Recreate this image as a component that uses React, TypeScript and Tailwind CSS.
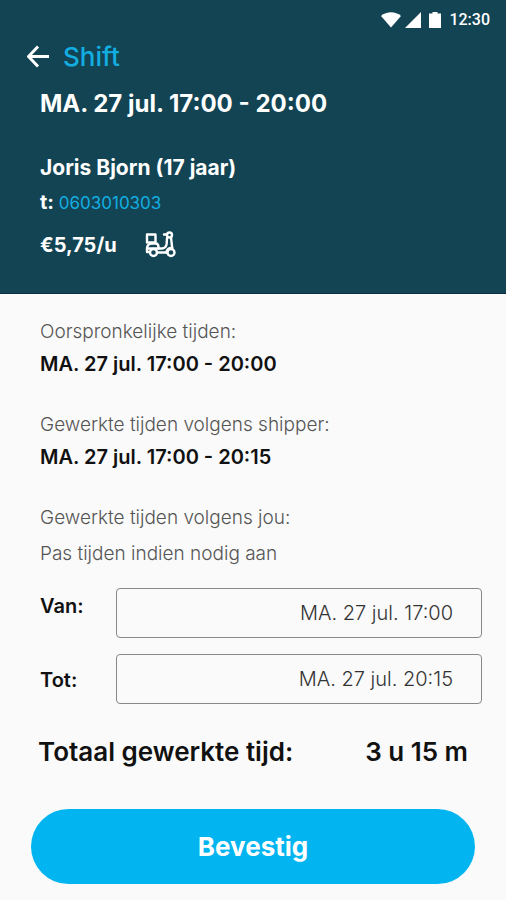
import { useState } from "react";

type WorkedTime = {
    label: string;
    value: string;
};

const workedTimes: WorkedTime[] = [
    { label: "Oorspronkelijke tijden:", value: "MA. 27 jul. 17:00 - 20:00" },
    { label: "Gewerkte tijden volgens shipper:", value: "MA. 27 jul. 17:00 - 20:15" },
];

function StatusBar() {
    return (
        <div className="flex h-10 items-center justify-end pr-4 text-white">
            <svg className="mr-1 h-4 w-5" viewBox="0 0 20 16" fill="currentColor" aria-hidden="true">
                <path d="M0 4C5.5-1 14.500-1 20 4L10 15.500Z" />
            </svg>
            <svg className="mr-2 h-4 w-4" viewBox="0 0 16 16" fill="currentColor" aria-hidden="true">
                <path d="M16 0v16H0Z" />
            </svg>
            <svg className="mr-2 h-4 w-3" viewBox="0 0 12 16" fill="currentColor" aria-hidden="true">
                <path d="M3.500 0h5v1.500H12V16H0V1.500h3.500Z" />
            </svg>
            <span className="font-[Roboto,sans-serif] text-base font-medium">12:30</span>
        </div>
    );
}

function ScooterIcon() {
    return (
        <svg
            className="h-7 w-8"
            viewBox="0 0 32 28"
            fill="none"
            stroke="currentColor"
            strokeWidth="2.4"
            strokeLinejoin="round"
            strokeLinecap="round"
            role="img"
            aria-label="Scooter"
        >
            {/* box and rear body */}
            <rect x="2" y="3.500" width="8.500" height="8" />
            <path d="M4 21H2v-3.500C2 14.500 4 12.500 7 12.500h3.500c2 0 3 1.500 3 3.500v1.500M2.500 17.500h11" />
            {/* floor, steering column and handlebar */}
            <path d="M12 21.500h9.500M13.500 17.500H17c3-.5 4.500-2.500 4.700-5L22 7M26 6.500l1.200 10.500" />
            <circle cx="24.500" cy="4" r="2.500" />
            <path d="M22 3.500h-3M21.500 21.500c0-3 2.500-5 5.700-4.500" />
            <circle cx="8.500" cy="21.500" r="3.500" />
            <circle cx="26" cy="21.500" r="3.500" />
        </svg>
    );
}

export default function App() {
    const [from, setFrom] = useState("MA. 27 jul. 17:00");
    const [until, setUntil] = useState("MA. 27 jul. 20:15");

    return (
        <main className="min-h-screen bg-[#fafafa] font-[Inter,sans-serif] text-[#111111]">
            <header className="border-b border-[#0b2c42] bg-[#124454] pb-8 text-white">
                <StatusBar />

                <div className="flex h-8 items-center gap-3 px-[27px]">
                    <button type="button" aria-label="Terug">
                        <svg
                            className="h-6 w-6"
                            viewBox="0 0 24 24"
                            fill="none"
                            stroke="currentColor"
                            strokeWidth="3"
                            aria-hidden="true"
                        >
                            <path d="M11 2.500L1.500 12.500l9.500 10M1.500 12.500H22" />
                        </svg>
                    </button>
                    <h1 className="text-[26px] font-medium text-[#12aee2]">Shift</h1>
                </div>

                <div className="px-10">
                    <h2 className="mt-4 text-2xl font-bold">MA. 27 jul. 17:00 - 20:00</h2>
                    <p className="mt-8 text-[21px] leading-8 font-bold">Joris Bjorn (17 jaar)</p>
                    <p className="text-xl leading-9 font-bold">
                        t:{" "}
                        <a href="tel:0603010303" className="text-[17px] font-normal text-[#12aee2]">
                            0603010303
                        </a>
                    </p>
                    <div className="mt-2 flex items-center gap-7">
                        <span className="text-xl leading-8 font-bold">€5,75/u</span>
                        <ScooterIcon />
                    </div>
                </div>
            </header>

            <section className="px-10 pt-6">
                {workedTimes.map((t) => (
                    <div key={t.label} className="mb-[31px]">
                        <p className="text-[19px] leading-7 font-light text-[#555555]">{t.label}</p>
                        <p className="mt-0.5 text-xl leading-8 font-semibold">{t.value}</p>
                    </div>
                ))}
                <p className="text-[19px] leading-7 font-light text-[#555555]">
                    Gewerkte tijden volgens jou:
                </p>
                <p className="mt-2 text-[19px] leading-7 font-light text-[#555555]">
                    Pas tijden indien nodig aan
                </p>
            </section>

            <form onSubmit={(e) => e.preventDefault()}>
                <div className="mt-5 flex items-start pr-6 pl-10">
                    <div className="flex w-[76px] shrink-0 flex-col gap-[38px] text-xl leading-9 font-semibold">
                        <label htmlFor="from">Van:</label>
                        <label htmlFor="until">Tot:</label>
                    </div>
                    <div className="flex min-w-0 flex-1 flex-col gap-4">
                        <input
                            id="from"
                            value={from}
                            onChange={(e) => setFrom(e.target.value)}
                            className="h-[50px] w-full rounded border border-[#888888] bg-transparent px-7 text-right text-xl font-light text-[#333333]"
                        />
                        <input
                            id="until"
                            value={until}
                            onChange={(e) => setUntil(e.target.value)}
                            className="h-[50px] w-full rounded border border-[#888888] bg-transparent px-7 text-right text-xl font-light text-[#333333]"
                        />
                    </div>
                </div>

                <div className="mt-8 flex items-center justify-between px-[38px] text-[26px] leading-8 font-semibold">
                    <span>Totaal gewerkte tijd:</span>
                    <output>3 u 15 m</output>
                </div>

                <div className="mt-[41px] px-[31px] pb-4">
                    <button
                        type="submit"
                        className="h-[75px] w-full rounded-full bg-[#02b5f0] text-[26px] font-bold text-white"
                    >
                        Bevestig
                    </button>
                </div>
            </form>
        </main>
    );
}
